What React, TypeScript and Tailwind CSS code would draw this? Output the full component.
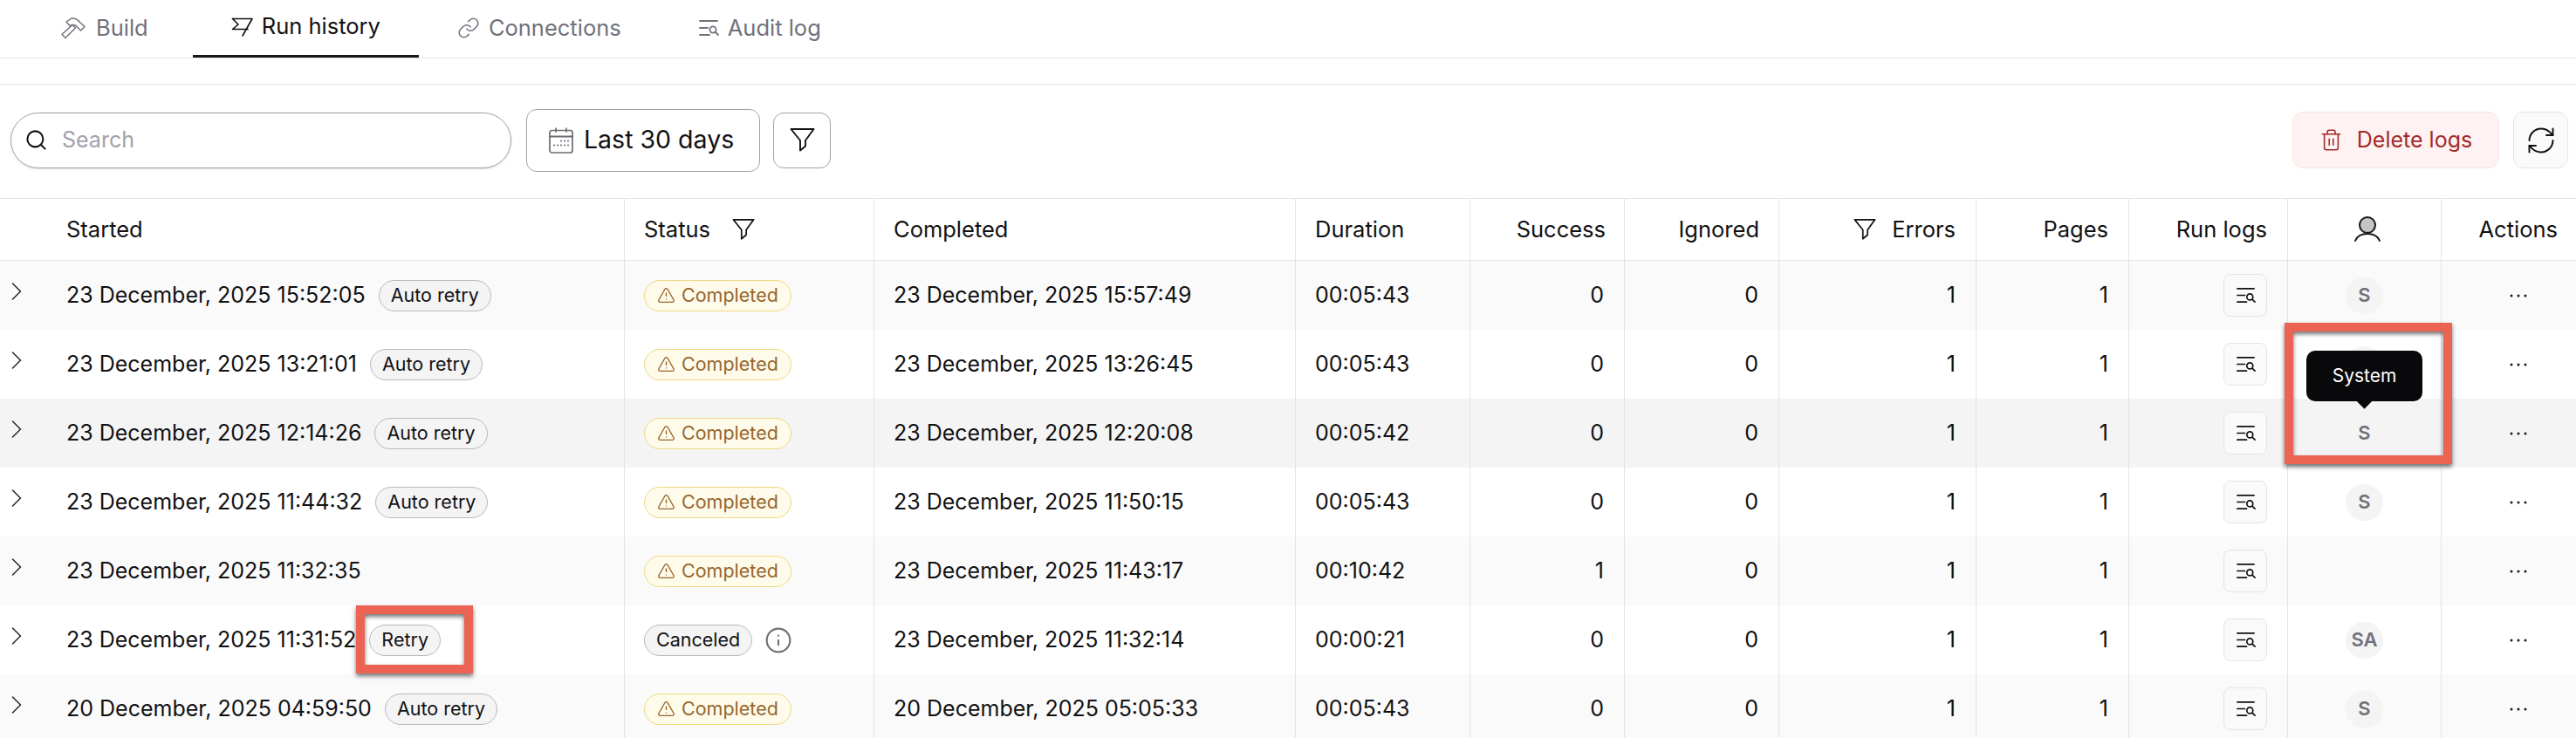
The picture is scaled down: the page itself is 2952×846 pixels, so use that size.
import { Info, Link, RefreshCw, Search, Trash2, TriangleAlert } from 'lucide-react'

const COLS = 'grid grid-cols-[716px_286px_483px_200px_177px_177px_226px_175px_182px_176px_154px]'

const ROWS = [
  { started: '23 December, 2025 15:52:05', badge: 'Auto retry', completed: '23 December, 2025 15:57:49', duration: '00:05:43', success: 0, user: 'S', bg: 'bg-[#fafafa]' },
  { started: '23 December, 2025 13:21:01', badge: 'Auto retry', completed: '23 December, 2025 13:26:45', duration: '00:05:43', success: 0, user: 'S', bg: 'bg-white' },
  { started: '23 December, 2025 12:14:26', badge: 'Auto retry', completed: '23 December, 2025 12:20:08', duration: '00:05:42', success: 0, user: 'S', bg: 'bg-[#f4f4f5]' },
  { started: '23 December, 2025 11:44:32', badge: 'Auto retry', completed: '23 December, 2025 11:50:15', duration: '00:05:43', success: 0, user: 'S', bg: 'bg-white' },
  { started: '23 December, 2025 11:32:35', badge: '', completed: '23 December, 2025 11:43:17', duration: '00:10:42', success: 1, user: '', bg: 'bg-[#fafafa]' },
  { started: '23 December, 2025 11:31:52', badge: 'Retry', completed: '23 December, 2025 11:32:14', duration: '00:00:21', success: 0, user: 'SA', bg: 'bg-white', canceled: true },
  { started: '20 December, 2025 04:59:50', badge: 'Auto retry', completed: '20 December, 2025 05:05:33', duration: '00:05:43', success: 0, user: 'S', bg: 'bg-[#fafafa]' },
]

function HammerIcon() {
  return (
    <svg width="31" height="26" viewBox="0 0 31 26" fill="none" stroke="currentColor" strokeWidth="1.5" strokeLinejoin="round">
      <path d="M2 20.5L14 9.5L17.5 13L6 24.5Z" />
      <path d="M7 6L13 2Q19 1.5 22.5 6.5L28 11.5L23.5 16L17.5 10L14 9.5L11 10.5Z" />
    </svg>
  )
}

function FlagIcon() {
  return (
    <svg width="25" height="22" viewBox="0 0 25 22" fill="none" stroke="currentColor" strokeWidth="1.6" strokeLinejoin="round" strokeLinecap="round">
      <path d="M1.5 1.5H24L13 21" />
      <path d="M1.5 1.5L8 8L1.5 13.5H19" />
    </svg>
  )
}

function LogsIcon({ size = 24 }: { size?: number }) {
  return (
    <svg width={size} height={size} viewBox="0 0 24 24" fill="none" stroke="currentColor" strokeWidth="1.8" strokeLinecap="round">
      <path d="M2 4h20M2 12h9M2 20h11" />
      <circle cx="17" cy="14" r="3.6" />
      <path d="M20 17l3 3" />
    </svg>
  )
}

function UserIcon() {
  return (
    <svg width="32" height="30" viewBox="0 0 32 30" fill="none" stroke="#18181b" strokeWidth="2" strokeLinecap="round">
      <circle cx="16" cy="10" r="9" fill="#c4c4c8" />
      <path d="M2 28c2-5 7-8 14-8s12 3 14 8" />
    </svg>
  )
}

function FunnelIcon({ size = 29 }: { size?: number }) {
  return (
    <svg width={size} height={size} viewBox="0 0 29 28" fill="none" stroke="currentColor" strokeWidth="1.9" strokeLinejoin="round">
      <path d="M1.5 1.5H27.5L18 14.5V21L12 26V14.5Z" />
    </svg>
  )
}

function CalendarIcon() {
  return (
    <svg width="28" height="30" viewBox="0 0 28 30" fill="none" stroke="#6b6b73" strokeWidth="1.7" strokeLinecap="round">
      <rect x="1" y="3.5" width="26" height="25.5" rx="2.5" />
      <path d="M1 10.5H27" strokeWidth="2.2" />
      <path d="M8 1V5M20 1V5" />
      <path d="M14 15.5h.1M18 15.5h.1M22 15.5h.1M6 20.5h.1M10 20.5h.1M14 20.5h.1M18 20.5h.1M22 20.5h.1" strokeWidth="1.9" />
    </svg>
  )
}

function ChevronIcon() {
  return (
    <svg width="12" height="20" viewBox="0 0 12 20" fill="none" stroke="#27272a" strokeWidth="1.5" strokeLinecap="round" strokeLinejoin="round">
      <path d="M1.5 1L10.5 10L1.5 19" />
    </svg>
  )
}

function DotsIcon() {
  return (
    <svg width="20" height="4" viewBox="0 0 20 4" fill="#18181b">
      <circle cx="2" cy="2" r="1.5" />
      <circle cx="10" cy="2" r="1.5" />
      <circle cx="18" cy="2" r="1.5" />
    </svg>
  )
}

function Tab({ icon, label, active, className = '' }: { icon: React.ReactNode; label: string; active?: boolean; className?: string }) {
  return (
    <div
      className={`flex h-[66px] items-center gap-[10px] px-[44px] pb-[2px] text-[25.5px] ${
        active ? 'border-b-[3px] border-[#18181b] text-[#111113]' : 'text-[#71717a]'
      } ${className}`}
    >
      {icon}
      {label}
    </div>
  )
}

function Badge({ label }: { label: string }) {
  return (
    <span className="ml-[15px] flex h-[36px] items-center rounded-full border border-[#b9b9c0] bg-[#f4f4f5] px-[13px] text-[21.5px] leading-none text-[#111113]">
      {label}
    </span>
  )
}

function Head({ children, right, className = '' }: { children: React.ReactNode; right?: boolean; className?: string }) {
  return (
    <div className={`flex items-center border-r border-[#e4e4e7] last:border-r-0 ${right ? 'justify-end pr-[23px]' : 'pl-[22px]'} ${className}`}>
      {children}
    </div>
  )
}

export default function App() {
  return (
    <div className="relative h-[846px] w-[2952px] overflow-hidden bg-white font-['Inter',sans-serif] text-[25px] text-[#111113]">
      <nav className="flex h-[67px] border-b border-[#e4e4e7] pl-[25px]">
        <Tab icon={<HammerIcon />} label="Build" className="mr-[7px]" />
        <Tab icon={<FlagIcon />} label="Run history" active />
        <Tab icon={<Link size={26} strokeWidth={1.4} />} label="Connections" />
        <Tab icon={<LogsIcon />} label="Audit log" />
      </nav>
      <div className="h-[30px] border-b border-[#e4e4e7]" />

      <div className="flex h-[130px] items-center pb-[3px] pl-[12px] pr-[9px]">
        <div className="flex h-[64px] w-[574px] items-center gap-[16px] rounded-full border border-[#a1a1aa] pl-[15px] shadow-sm">
          <Search size={27} strokeWidth={1.8} />
          <span className="text-[#a1a1aa]">Search</span>
        </div>
        <div className="ml-[17px] flex h-[72px] w-[268px] items-center gap-[12px] rounded-[12px] border border-[#a1a1aa] pl-[25px] text-[28.5px]">
          <CalendarIcon />
          Last 30 days
        </div>
        <div className="ml-[15px] flex h-[64px] w-[66px] items-center justify-center rounded-[12px] border border-[#a1a1aa]">
          <FunnelIcon />
        </div>
        <div className="ml-auto flex h-[65px] w-[237px] items-center justify-center gap-[16px] rounded-[12px] border border-[#fde4e4] bg-[#fef2f2] text-[25px] text-[#a32a2a]">
          <Trash2 size={27} strokeWidth={1.4} />
          Delete logs
        </div>
        <div className="ml-[16px] flex h-[65px] w-[63px] items-center justify-center rounded-[12px] border border-[#e4e4e7] bg-[#fafafa]">
          <RefreshCw size={36} strokeWidth={1.3} />
        </div>
      </div>

      <div className={`${COLS} h-[72px] border-y border-[#e4e4e7] text-[25.5px]`}>
        <Head className="pl-[76px]">Started</Head>
        <Head className="gap-[25px]">
          Status
          <FunnelIcon size={26} />
        </Head>
        <Head>Completed</Head>
        <Head>Duration</Head>
        <Head right className="!pr-[21px]">Success</Head>
        <Head right className="!pr-[22px]">Ignored</Head>
        <Head right className="gap-[18px]">
          <FunnelIcon size={26} />
          Errors
        </Head>
        <Head right>Pages</Head>
        <Head right>Run logs</Head>
        <Head className="justify-center !pl-[6px]">
          <UserIcon />
        </Head>
        <Head right className="!pr-[21px]">Actions</Head>
      </div>

      {ROWS.map((row) => (
        <div key={row.started} className={`${COLS} h-[79px] ${row.bg}`}>
          <Head className="relative pl-[76px]">
            <span className="absolute left-[13px] top-[25px] flex">
              <ChevronIcon />
            </span>
            {row.started}
            {row.badge && <Badge label={row.badge} />}
          </Head>
          <Head>
            {row.canceled ? (
              <>
                <span className="flex h-[36px] items-center rounded-full border border-[#b9b9c0] bg-[#f4f4f5] px-[13px] text-[21.5px] leading-none">
                  Canceled
                </span>
                <Info size={32} strokeWidth={1.6} className="ml-[14px] text-[#71717a]" />
              </>
            ) : (
              <span className="flex h-[36px] items-center gap-[7px] rounded-full border border-[#f0d77f] bg-[#fffbeb] px-[14px] text-[21.5px] leading-none text-[#96662c]">
                <TriangleAlert size={21} strokeWidth={1.6} />
                Completed
              </span>
            )}
          </Head>
          <Head>{row.completed}</Head>
          <Head>{row.duration}</Head>
          <Head right>{row.success}</Head>
          <Head right>0</Head>
          <Head right>1</Head>
          <Head right>1</Head>
          <Head right>
            <span className="flex h-[49px] w-[50px] items-center justify-center rounded-[8px] border border-[#e4e4e7] bg-[#fafafa]">
              <LogsIcon size={23} />
            </span>
          </Head>
          <Head className="justify-center !pl-0">
            {row.user && (
              <span className="flex h-[42px] min-w-[43px] items-center justify-center rounded-full bg-[#f4f4f5] px-[5px] text-[22px] font-semibold text-[#71717a]">
                {row.user}
              </span>
            )}
          </Head>
          <Head right className="!pr-[56px]">
            <DotsIcon />
          </Head>
        </div>
      ))}

      {/* annotations */}
      <div className="absolute left-[2618px] top-[370px] h-[162px] w-[192px] border-[10px] border-[#ec6354] shadow-[0_3px_5px_rgba(0,0,0,0.55),inset_0_3px_5px_rgba(0,0,0,0.55)]" />
      <div className="absolute left-[408px] top-[694px] h-[78px] w-[134px] border-[10px] border-[#ec6354] shadow-[0_3px_5px_rgba(0,0,0,0.55),inset_0_3px_5px_rgba(0,0,0,0.55)]" />

      <div className="absolute left-[2643px] top-[402px] flex h-[58px] w-[133px] items-center justify-center rounded-[10px] bg-[#09090b] text-[21px] text-white">
        System
        <span className="absolute bottom-[-6px] left-[60px] h-[13px] w-[13px] rotate-45 bg-[#09090b]" />
      </div>
    </div>
  )
}
